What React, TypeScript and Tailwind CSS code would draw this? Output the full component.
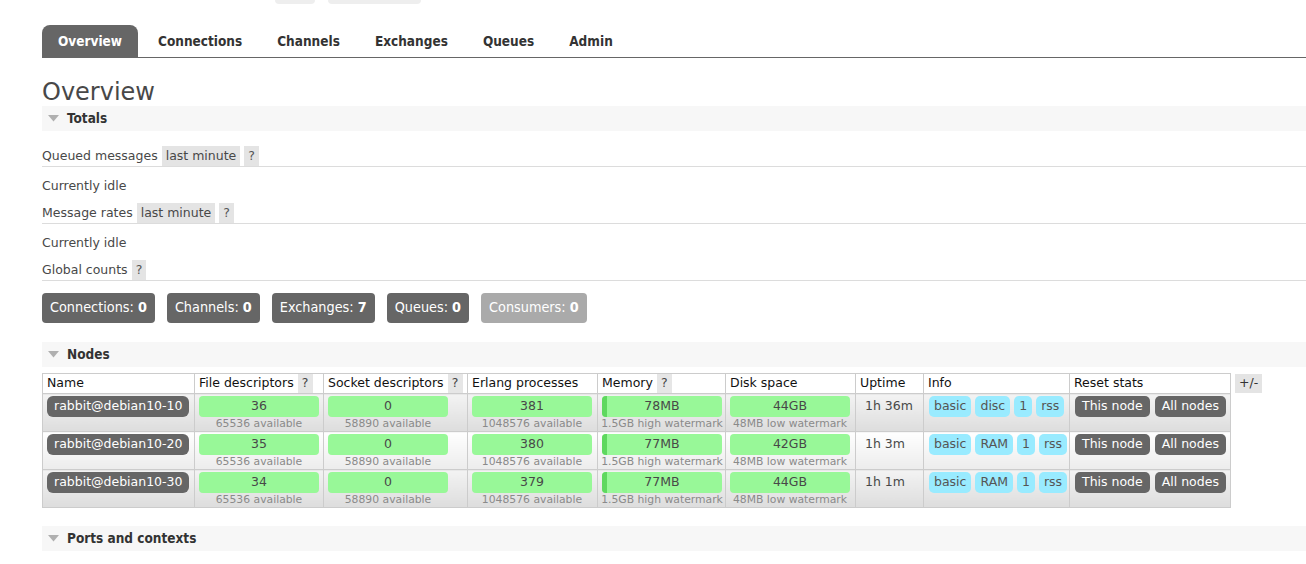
import React from "react";

const SANS = "font-['DejaVu_Sans',Verdana,sans-serif]";
const COND = "font-['DejaVu_Sans_Condensed','DejaVu_Sans',sans-serif] [font-stretch:condensed]";

function Triangle() {
  return (
    <svg width="11" height="7" viewBox="0 0 11 7" className="shrink-0">
      <polygon points="0,0 11,0 5.5,6.5" fill="#b0b0b0" />
    </svg>
  );
}

function SectionHeader({ title }: { title: string }) {
  return (
    <div className="h-[25px] bg-[#f7f7f7] flex items-center pl-[6px]">
      <Triangle />
      <span className={`${COND} ml-[8px] font-bold text-[13.5px] text-[#333]`}>{title}</span>
    </div>
  );
}

function SubHeader({ label, last }: { label: string; last?: boolean }) {
  return (
    <div className="flex items-stretch h-[21px] border-b border-[#dcdcdc]">
      <span className="flex items-center pr-[4px]">{label}</span>
      {last && <span className="flex items-center bg-[#e4e4e4] px-[4px] mr-[4px]">last minute</span>}
      <span className="flex items-center bg-[#e4e4e4] px-[4px] text-[#555]">?</span>
    </div>
  );
}

function Badge({ label, value, dim }: { label: string; value: string; dim?: boolean }) {
  return (
    <div
      className={`${COND} h-[30px] flex items-center px-[8px] rounded-[4px] text-white text-[14.3px] ${
        dim ? "bg-[#aaaaaa]" : "bg-[#666666]"
      }`}
    >
      {label}:&nbsp;<b>{value}</b>
    </div>
  );
}

function Bar({ value, sub, used }: { value: string; sub: string; used?: boolean }) {
  return (
    <div className="w-[120px]">
      <div className="relative h-[21px] rounded-[4px] bg-[#98f898] flex items-center justify-center text-[#484848] overflow-hidden">
        {used && <div className="absolute left-0 top-0 bottom-0 w-[5px] bg-[#5fd85f]" />}
        <span className="relative">{value}</span>
      </div>
      <div className="text-center text-[10.8px] leading-[13px] text-[#8a8a8a] whitespace-nowrap -mx-[4px]">{sub}</div>
    </div>
  );
}

type Node = {
  name: string;
  fd: string;
  sd: string;
  ep: string;
  mem: string;
  disk: string;
  up: string;
  kind: string;
};

const nodes: Node[] = [
  { name: "rabbit@debian10-10", fd: "36", sd: "0", ep: "381", mem: "78MB", disk: "44GB", up: "1h 36m", kind: "disc" },
  { name: "rabbit@debian10-20", fd: "35", sd: "0", ep: "380", mem: "77MB", disk: "42GB", up: "1h 3m", kind: "RAM" },
  { name: "rabbit@debian10-30", fd: "34", sd: "0", ep: "379", mem: "77MB", disk: "44GB", up: "1h 1m", kind: "RAM" },
];

function Th({ label, help }: { label: string; help?: boolean }) {
  return (
    <th className="border border-[#cccccc] p-0 text-left font-normal align-top">
      <div className="h-[19px] flex items-stretch pl-[4px]">
        <span className="flex items-center">{label}</span>
        {help && <span className="flex items-center justify-center w-[15px] ml-[4px] bg-[#e6e6e6] text-[#444]">?</span>}
      </div>
    </th>
  );
}

function Td({ children, alt, className = "" }: { children?: React.ReactNode; alt: boolean; className?: string }) {
  return (
    <td
      className={`border border-[#cccccc] p-0 pl-[4px] pt-[2px] pb-[1px] align-top h-[37px] bg-linear-to-b ${
        alt ? "from-[#ffffff] to-[#ececec]" : "from-[#f3f3f3] to-[#dddddd]"
      } ${className}`}
    >
      {children}
    </td>
  );
}

function Pill({ children, dark }: { children: React.ReactNode; dark?: boolean }) {
  return (
    <span
      className={`h-[21px] flex items-center px-[5px] rounded-[5px] ${
        dark ? "bg-[#666666] text-white px-[7px]" : "bg-[#99ebff] text-[#555]"
      }`}
    >
      {children}
    </span>
  );
}

export default function App() {
  return (
    <div className={`${SANS} text-[12.5px] text-[#484848] bg-white min-h-[564px] pl-[42px] overflow-hidden`}>
      {/* top remnants */}
      <div className="flex h-[4px]">
        <div className="ml-[233px] w-[40px] h-[4px] bg-[#eeeeee] rounded-b-[4px]" />
        <div className="ml-[13px] w-[93px] h-[4px] bg-[#eeeeee] rounded-b-[4px]" />
      </div>

      {/* tabs */}
      <div className={`${COND} mt-[21px] flex border-b border-[#666666] font-bold text-[13.5px]`}>
        {["Overview", "Connections", "Channels", "Exchanges", "Queues", "Admin"].map((t, i) => (
          <div
            key={t}
            className={`h-[32px] flex items-center mr-[5px] rounded-t-[8px] ${
              i === 0 ? "bg-[#666666] text-white px-[16px]" : "text-[#333] px-[15px]"
            }`}
          >
            {t}
          </div>
        ))}
      </div>

      <h1 className="mt-[21px] text-[24px] leading-[27px] text-[#484848] font-normal">Overview</h1>

      <SectionHeader title="Totals" />

      <div className="mt-[15px]">
        <SubHeader label="Queued messages" last />
      </div>
      <p className="mt-[11px] leading-[16px]">Currently idle</p>
      <div className="mt-[9px]">
        <SubHeader label="Message rates" last />
      </div>
      <p className="mt-[11px] leading-[16px]">Currently idle</p>
      <div className="mt-[9px]">
        <SubHeader label="Global counts" />
      </div>

      <div className="mt-[12px] flex gap-[12px]">
        <Badge label="Connections" value="0" />
        <Badge label="Channels" value="0" />
        <Badge label="Exchanges" value="7" />
        <Badge label="Queues" value="0" />
        <Badge label="Consumers" value="0" dim />
      </div>

      <div className="mt-[19px]">
        <SectionHeader title="Nodes" />
      </div>

      <div className="mt-[6px] flex items-start gap-[4px]">
        <table className="table-fixed border-collapse w-[1188px] text-[#484848]">
          <colgroup>
            <col className="w-[152px]" />
            <col className="w-[129px]" />
            <col className="w-[144px]" />
            <col className="w-[130px]" />
            <col className="w-[128px]" />
            <col className="w-[130px]" />
            <col className="w-[68px]" />
            <col className="w-[146px]" />
            <col className="w-[161px]" />
          </colgroup>
          <thead className="bg-white text-[#111]">
            <tr>
              <Th label="Name" />
              <Th label="File descriptors" help />
              <Th label="Socket descriptors" help />
              <Th label="Erlang processes" />
              <Th label="Memory" help />
              <Th label="Disk space" />
              <Th label="Uptime" />
              <Th label="Info" />
              <Th label="Reset stats" />
            </tr>
          </thead>
          <tbody>
            {nodes.map((n, i) => {
              const alt = i === 1;
              return (
                <tr key={n.name}>
                  <Td alt={alt}>
                    <span className="inline-flex h-[21px] items-center px-[7px] rounded-[6px] bg-[#666666] text-white">
                      {n.name}
                    </span>
                  </Td>
                  <Td alt={alt}>
                    <Bar value={n.fd} sub="65536 available" />
                  </Td>
                  <Td alt={alt}>
                    <Bar value={n.sd} sub="58890 available" />
                  </Td>
                  <Td alt={alt}>
                    <Bar value={n.ep} sub="1048576 available" />
                  </Td>
                  <Td alt={alt}>
                    <Bar value={n.mem} sub="1.5GB high watermark" used />
                  </Td>
                  <Td alt={alt}>
                    <Bar value={n.disk} sub="48MB low watermark" />
                  </Td>
                  <Td alt={alt} className="pl-[9px]">
                    <div className="h-[21px] flex items-center whitespace-nowrap">{n.up}</div>
                  </Td>
                  <Td alt={alt}>
                    <div className="flex gap-[4px] pl-[1px]">
                      <Pill>basic</Pill>
                      <Pill>{n.kind}</Pill>
                      <Pill>1</Pill>
                      <Pill>rss</Pill>
                    </div>
                  </Td>
                  <Td alt={alt}>
                    <div className="flex gap-[5px] pl-[1px]">
                      <Pill dark>This node</Pill>
                      <Pill dark>All nodes</Pill>
                    </div>
                  </Td>
                </tr>
              );
            })}
          </tbody>
        </table>
        <div className="h-[19px] mt-[1px] flex items-center px-[4px] bg-[#e4e4e4] text-[#333]">+/-</div>
      </div>

      <div className="mt-[18px]">
        <SectionHeader title="Ports and contexts" />
      </div>
    </div>
  );
}
